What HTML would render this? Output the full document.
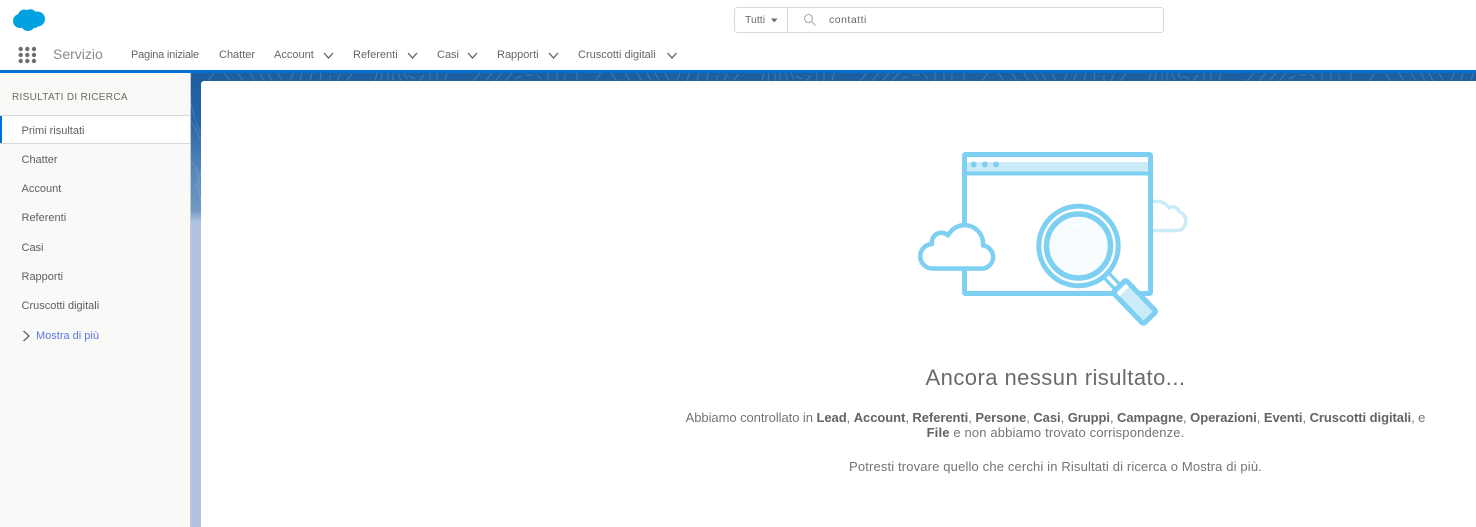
<!DOCTYPE html>
<html lang="it">
<head>
<meta charset="utf-8">
<title>Risultati di ricerca</title>
<style>
html,body{margin:0;padding:0;width:1476px;height:527px;overflow:hidden;background:#fff}
body{position:relative;font-family:"Liberation Sans",sans-serif;color:#5f5f5f}
.a{position:absolute;white-space:nowrap}
.nav{font-size:11px;line-height:14px;top:48px;color:#666}
.side{font-size:11px;line-height:14px;left:21.5px;color:#5f5f5f}
.line{left:601px;width:909px;text-align:center;font-size:13px;line-height:16px;color:#767472}
.line b{color:#636363}
svg{position:absolute;display:block}
</style>
</head>
<body>
<!-- background band -->
<div class="a" style="left:191px;top:70px;width:1285px;height:457px;background:linear-gradient(#1d5e9f 0,#2664a6 50px,#5a89bb 105px,#6f98c3 140px,#aec3e0 152px,#aec3e0 100%)"></div>
<svg style="left:191px;top:73px" width="1285" height="9" viewBox="0 0 1285 9">
<defs>
<pattern id="p" x="182" y="0" width="387" height="9" patternUnits="userSpaceOnUse">
<path d="M2 8l2-8M8 8l1-8M15 8V0M20 8V0M25 0l3 8M31 0l3 6M36 3l6 3M46 8l5-6M57 8V0M64 8V0M72 8l2-8M100 8l7-8M112 8l7-8M122 8l7-8M132 8l7-8M142 6l6-3M152 2h8M164 1l4 5M175 8V0M184 8V0M192 8V1M204 8V0M222 8l6-8M238 0l6 8M252 0l5 8M264 0l5 8M274 0l4 8M282 0l4 8M292 0l4 8M304 8l3-8M314 8l2-8M324 8l2-8M334 8l1-8M344 8V2M351 8l3-7M360 8l6-7" fill="none" stroke="#fff" stroke-opacity=".17" stroke-width="1"/>
</pattern>
</defs>
<rect width="1285" height="9" fill="url(#p)"/>
</svg>
<svg style="left:191px;top:73px" width="10" height="150" viewBox="0 0 10 150" fill="none" stroke="#fff" stroke-opacity=".14">
<path d="M0 30c3 14 6 24 10 30M0 47c4 8 7 14 10 20M-2 88c8 3 12 14 6 28M10 98c-3 10-3 20 0 30"/>
</svg>
<div class="a" style="left:0;top:70px;width:1476px;height:3px;background:#0070d2"></div>

<!-- card -->
<div class="a" style="left:201px;top:81px;width:1275px;height:446px;background:#fff;border-top-left-radius:3px"></div>

<!-- sidebar -->
<div class="a" style="left:0;top:73px;width:190px;height:454px;background:#f9f9f7"></div>
<div class="a" style="left:190px;top:73px;width:1px;height:454px;background:#c9c9c9"></div>
<div class="a" style="left:12px;top:91px;font-size:10px;line-height:14px;letter-spacing:.32px;color:#6f6a62">RISULTATI DI RICERCA</div>
<div class="a" style="left:0;top:115px;width:190px;height:27px;background:#fff;border-top:1px solid #d8d8d8;border-bottom:1px solid #d8d8d8"></div>
<div class="a" style="left:0;top:116px;width:2px;height:27px;background:#0070d2"></div>
<div class="a side" style="top:124px">Primi risultati</div>
<div class="a side" style="top:153px">Chatter</div>
<div class="a side" style="top:182px">Account</div>
<div class="a side" style="top:211px">Referenti</div>
<div class="a side" style="top:241px">Casi</div>
<div class="a side" style="top:270px">Rapporti</div>
<div class="a side" style="top:299px">Cruscotti digitali</div>
<svg style="left:22px;top:330px" width="10" height="12" viewBox="0 0 10 12"><path d="M1.500 1l5.500 5-5.500 5" fill="none" stroke="#666" stroke-width="1.400"/></svg>
<div class="a side" style="left:36px;top:329px;color:#5a78e6">Mostra di più</div>

<!-- logo -->
<svg style="left:10px;top:6px" width="38" height="28" viewBox="10 6 38 28" fill="#00a1e0">
<circle cx="20" cy="21" r="7"/><circle cx="24.500" cy="16" r="6.500"/><circle cx="30.500" cy="15.500" r="6.200"/><circle cx="37.500" cy="19" r="7.500"/><circle cx="28" cy="24" r="7"/><circle cx="34" cy="22" r="6"/><circle cx="28" cy="19" r="7"/>
</svg>

<!-- app launcher -->
<svg style="left:17px;top:45.300px" width="22" height="20" viewBox="0 0 22 20" fill="#706e6b">
<circle cx="3.700" cy="4" r="2.200"/><circle cx="10.300" cy="4" r="2.200"/><circle cx="17" cy="4" r="2.200"/>
<circle cx="3.700" cy="10" r="2.200"/><circle cx="10.300" cy="10" r="2.200"/><circle cx="17" cy="10" r="2.200"/>
<circle cx="3.700" cy="16" r="2.200"/><circle cx="10.300" cy="16" r="2.200"/><circle cx="17" cy="16" r="2.200"/>
</svg>
<div class="a" style="left:53px;top:45px;font-size:14px;line-height:18px;color:#8a8a8a">Servizio</div>

<!-- nav -->
<div class="a nav" style="left:131px;letter-spacing:-.2px">Pagina iniziale</div>
<div class="a nav" style="left:219px">Chatter</div>
<div class="a nav" style="left:274px">Account</div>
<div class="a nav" style="left:353px">Referenti</div>
<div class="a nav" style="left:437px">Casi</div>
<div class="a nav" style="left:497px">Rapporti</div>
<div class="a nav" style="left:578px">Cruscotti digitali</div>
<svg style="left:0;top:51px" width="700" height="10" viewBox="0 0 700 10" fill="none" stroke="#5f5f5f" stroke-width="1.300">
<path d="M324 2l4.500 5 4.500-5M408 2l4.500 5 4.500-5M468 2l4.500 5 4.500-5M549 2l4.500 5 4.500-5M667.500 2l4.500 5 4.500-5"/>
</svg>

<!-- search -->
<div class="a" style="left:734px;top:7px;width:428px;height:24px;border:1px solid #d8d8d8;border-radius:3px;background:#fff"></div>
<div class="a" style="left:787px;top:8px;width:1px;height:24px;background:#d8d8d8"></div>
<div class="a" style="left:745px;top:13px;font-size:10.500px;line-height:14px;color:#6b6b6b">Tutti</div>
<svg style="left:771px;top:18px" width="7" height="5" viewBox="0 0 7 5"><path d="M0 .5h6.500L3.250 4.500z" fill="#6b6b6b"/></svg>
<svg style="left:803px;top:13px" width="13" height="13" viewBox="0 0 13 13" fill="none" stroke="#a9a9a9" stroke-width="1.100"><circle cx="5.500" cy="5.500" r="4"/><path d="M8.500 8.500l4 4"/></svg>
<div class="a" style="left:829px;top:13px;font-size:10.500px;line-height:14px;letter-spacing:.5px;color:#666">contatti</div>

<!-- illustration -->
<svg style="left:900px;top:140px" width="310" height="200" viewBox="900 140 310 200" fill="none">
<path d="M1153 202C1160 200 1166 203 1169 208A6.500 6.500 0 0 1 1179 211.500A10 10 0 0 1 1179 230.500H1153" fill="#fff" stroke="#cbebf9" stroke-width="3.500"/>
<rect x="964.500" y="154.500" width="186" height="139" rx="1" fill="#fff" stroke="#7dd0f2" stroke-width="5"/>
<rect x="967" y="162" width="181" height="10" fill="#cbebf9"/>
<path d="M963 173.500h189" stroke="#7dd0f2" stroke-width="4"/>
<circle cx="973.700" cy="164.500" r="3" fill="#7dd0f2"/><circle cx="984.800" cy="164.500" r="3" fill="#7dd0f2"/><circle cx="996" cy="164.500" r="3" fill="#7dd0f2"/>
<path d="M933 268.500H980A11.500 11.500 0 0 0 983 245.500A18.500 18.500 0 0 0 948 235.500A9.500 9.500 0 0 0 932 244A12 12 0 0 0 933 268.500Z" fill="#fff" stroke="#7dd0f2" stroke-width="4.500" stroke-linejoin="round"/>
<path d="M1106 275l15 15.500" stroke="#7dd0f2" stroke-width="10"/>
<path d="M1106 275l15 15.500" stroke="#fff" stroke-width="3.500"/>
<g transform="translate(1134.500 302) rotate(46)">
<rect x="-22" y="-9" width="44" height="18" rx="2" fill="#cbebf9" stroke="#7dd0f2" stroke-width="5"/>
<path d="M-16.500 -6.500V6.500" stroke="#fff" stroke-width="4"/>
</g>
<circle cx="1078.500" cy="246" r="39.700" fill="#fff" stroke="#7dd0f2" stroke-width="5"/>
<circle cx="1078.500" cy="246" r="32" fill="#f7fcff" stroke="#7dd0f2" stroke-width="5.500"/>
<path d="M1071 225c13-1 24 8 26 20" stroke="#fff" stroke-width="2"/>
</svg>

<!-- message -->
<div class="a" style="left:601px;width:909px;text-align:center;top:364px;font-size:22px;line-height:28px;letter-spacing:.45px;color:#6b6b6b">Ancora nessun risultato...</div>
<div class="a line" style="top:410px;letter-spacing:-.06px">Abbiamo controllato in <b>Lead</b>, <b>Account</b>, <b>Referenti</b>, <b>Persone</b>, <b>Casi</b>, <b>Gruppi</b>, <b>Campagne</b>, <b>Operazioni</b>, <b>Eventi</b>, <b>Cruscotti digitali</b>, e</div>
<div class="a line" style="top:425px;letter-spacing:.15px"><b>File</b> e non abbiamo trovato corrispondenze.</div>
<div class="a line" style="top:459px;letter-spacing:.15px">Potresti trovare quello che cerchi in Risultati di ricerca o Mostra di più.</div>
</body>
</html>
